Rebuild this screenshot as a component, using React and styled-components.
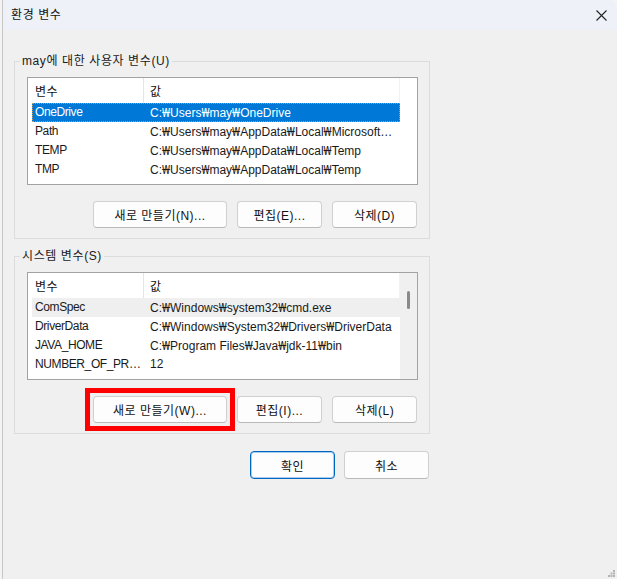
import React from "react";
import styled, { createGlobalStyle } from "styled-components";

const GlobalStyle = createGlobalStyle`
  html, body {
    margin: 0;
    padding: 0;
    background: #f4f4f4;
  }
  body {
    font-family: "Liberation Sans", "Noto Sans", "Noto Sans CJK KR", sans-serif;
    font-size: 12px;
    color: #111;
  }
`;

const Window = styled.div`
  position: relative;
  margin-left: 2px;
  width: 615px;
  height: 579px;
  box-sizing: border-box;
  border-left: 1px solid #c6c6c6;
  border-top-right-radius: 8px;
  background: #f0f0f0;
  display: flex;
  flex-direction: column;
  overflow: hidden;
`;

const TitleBar = styled.div`
  flex: none;
  height: 30px;
  padding: 0 10px 0 8px;
  background: #eef2f8;
  display: flex;
  align-items: center;
  justify-content: space-between;
`;

const Title = styled.span`
  font-size: 12px;
  line-height: 16px;
  letter-spacing: 0.6px;
`;

const Body = styled.div`
  padding: 23px 0 0 11px;
  display: flex;
  flex-direction: column;
  width: 416px;
`;

const Group = styled.fieldset`
  margin: ${p => (p.$first ? "0" : "9px 0 0")};
  padding: 8px 11px 10px 12px;
  border: 1px solid #dcdcdc;
  min-width: 0;
  box-sizing: border-box;
  width: 416px;
`;

const Legend = styled.legend`
  margin-left: -7px;
  padding: 0 2px;
  line-height: 16px;
  font-size: 12px;
  letter-spacing: 0.6px;
  color: #1a1a1a;
`;

const ListBox = styled.div`
  height: 108px;
  box-sizing: border-box;
  border: 1px solid #a2a2a2;
  background: #fff;
  display: flex;
  overflow: hidden;
`;

const ListMain = styled.div`
  flex: 1;
  min-width: 0;
  overflow: hidden;
`;

const Header = styled.div`
  height: 25px;
  display: grid;
  grid-template-columns: 116px 1fr;
`;

const HeaderCell = styled.div`
  display: flex;
  align-items: center;
  padding-left: ${p => (p.$first ? "7px" : "6px")};
  letter-spacing: 0.5px;
  border-right: 1px solid ${p => (p.$first ? "#e5e5e5" : "#f2f2f2")};
`;

const Row = styled.div`
  margin-left: 4px;
  height: 19px;
  box-sizing: border-box;
  display: grid;
  grid-template-columns: 112px 1fr;
  align-items: center;
  background: ${p => (p.$selected ? "#0078d7" : p.$hover ? "#efefef" : "transparent")};
  color: ${p => (p.$selected ? "#fff" : "#1a1a1a")};
  outline: ${p => (p.$selected ? "1px dotted #c89a5a" : "none")};
  outline-offset: -1px;
`;

const Cell = styled.span`
  padding-left: ${p => (p.$first ? "3px" : "6px")};
  padding-right: ${p => (p.$first ? "1px" : "4px")};
  letter-spacing: ${p => (p.$first ? "-0.4px" : "0")};
  white-space: nowrap;
  overflow: hidden;
  text-overflow: ellipsis;
  line-height: 19px;
`;

const Won = styled.span`
  font-family: "Noto Sans", sans-serif;
`;

const Side = styled.div`
  flex: none;
  width: 17px;
  background: ${p => (p.$scroll ? "#f0f0f0" : "#fff")};
  display: flex;
  justify-content: center;
`;

const Thumb = styled.div`
  margin-top: 18px;
  width: 3px;
  height: 18px;
  border-radius: 2px;
  background: #8a8a8a;
`;

const ButtonRow = styled.div`
  margin-top: 16px;
  margin-right: 1px;
  display: flex;
  justify-content: flex-end;
  align-items: center;
  gap: 10px;
`;

const Highlight = styled.div`
  margin: -8px;
  padding: 3px;
  border: 5px solid #ff0000;
  display: flex;
`;

const Button = styled.button`
  width: ${p => p.$w || 85}px;
  height: ${p => p.$h || 27}px;
  box-sizing: border-box;
  padding: 0;
  border: 1px solid ${p => (p.$primary ? "#0067c0" : "#d0d0d0")};
  border-bottom-color: ${p => (p.$primary ? "#0067c0" : "#b9b9b9")};
  border-radius: 4px;
  background: #fdfdfd;
  box-shadow: ${p => (p.$primary ? "inset 0 0 0 1px #a9cdef" : "none")};
  font-family: inherit;
  font-size: 12px;
  letter-spacing: 0.5px;
  color: #111;
`;

const Footer = styled.div`
  margin-top: 17px;
  margin-right: 1px;
  display: flex;
  justify-content: flex-end;
  gap: 9px;
`;

const Grip = styled.svg`
  position: absolute;
  right: 2px;
  bottom: 2px;
`;

const userVars = [
  ["OneDrive", "C:₩Users₩may₩OneDrive"],
  ["Path", "C:₩Users₩may₩AppData₩Local₩Microsoft₩WindowsApps;"],
  ["TEMP", "C:₩Users₩may₩AppData₩Local₩Temp"],
  ["TMP", "C:₩Users₩may₩AppData₩Local₩Temp"],
];

const systemVars = [
  ["ComSpec", "C:₩Windows₩system32₩cmd.exe"],
  ["DriverData", "C:₩Windows₩System32₩Drivers₩DriverData"],
  ["JAVA_HOME", "C:₩Program Files₩Java₩jdk-11₩bin"],
  ["NUMBER_OF_PROCESSORS", "12"],
];

// ₩ 기호만 좁은 글꼴로
const PathText = ({ text }) =>
  text.split("₩").map((part, i) => (
    <React.Fragment key={i}>
      {i > 0 && <Won>₩</Won>}
      {part}
    </React.Fragment>
  ));

const VarList = ({ rows, selected, hover, scroll }) => (
  <ListBox>
    <ListMain>
      <Header>
        <HeaderCell $first>변수</HeaderCell>
        <HeaderCell>값</HeaderCell>
      </Header>
      {rows.map(([name, value], i) => (
        <Row key={name} $selected={i === selected} $hover={i === hover}>
          <Cell $first>{name}</Cell>
          <Cell>
            <PathText text={value} />
          </Cell>
        </Row>
      ))}
    </ListMain>
    <Side $scroll={scroll}>{scroll && <Thumb />}</Side>
  </ListBox>
);

export default function App() {
  return (
    <>
      <GlobalStyle />
      <Window>
        <TitleBar>
          <Title>환경 변수</Title>
          <svg width="11" height="11" viewBox="0 0 11 11">
            <path d="M0.5 0.5 L10.5 10.5 M10.5 0.5 L0.5 10.5" stroke="#222" strokeWidth="1.1" />
          </svg>
        </TitleBar>
        <Body>
          <Group $first>
            <Legend>may에 대한 사용자 변수(U)</Legend>
            <VarList rows={userVars} selected={0} />
            <ButtonRow>
              <Button $w={134}>새로 만들기(N)...</Button>
              <Button>편집(E)...</Button>
              <Button>삭제(D)</Button>
            </ButtonRow>
          </Group>
          <Group>
            <Legend>시스템 변수(S)</Legend>
            <VarList rows={systemVars} hover={0} scroll />
            <ButtonRow>
              <Highlight>
                <Button $w={134}>새로 만들기(W)...</Button>
              </Highlight>
              <Button>편집(I)...</Button>
              <Button>삭제(L)</Button>
            </ButtonRow>
          </Group>
          <Footer>
            <Button $h={28} $primary>확인</Button>
            <Button $h={28}>취소</Button>
          </Footer>
        </Body>
        <Grip width="7" height="7" viewBox="0 0 7 7">
          <rect x="5" y="0" width="2" height="2" fill="#b4b4b4" />
          <rect x="2.5" y="2.5" width="2" height="2" fill="#b4b4b4" />
          <rect x="5" y="2.5" width="2" height="2" fill="#b4b4b4" />
          <rect x="0" y="5" width="2" height="2" fill="#b4b4b4" />
          <rect x="2.5" y="5" width="2" height="2" fill="#b4b4b4" />
          <rect x="5" y="5" width="2" height="2" fill="#b4b4b4" />
        </Grip>
      </Window>
    </>
  );
}
